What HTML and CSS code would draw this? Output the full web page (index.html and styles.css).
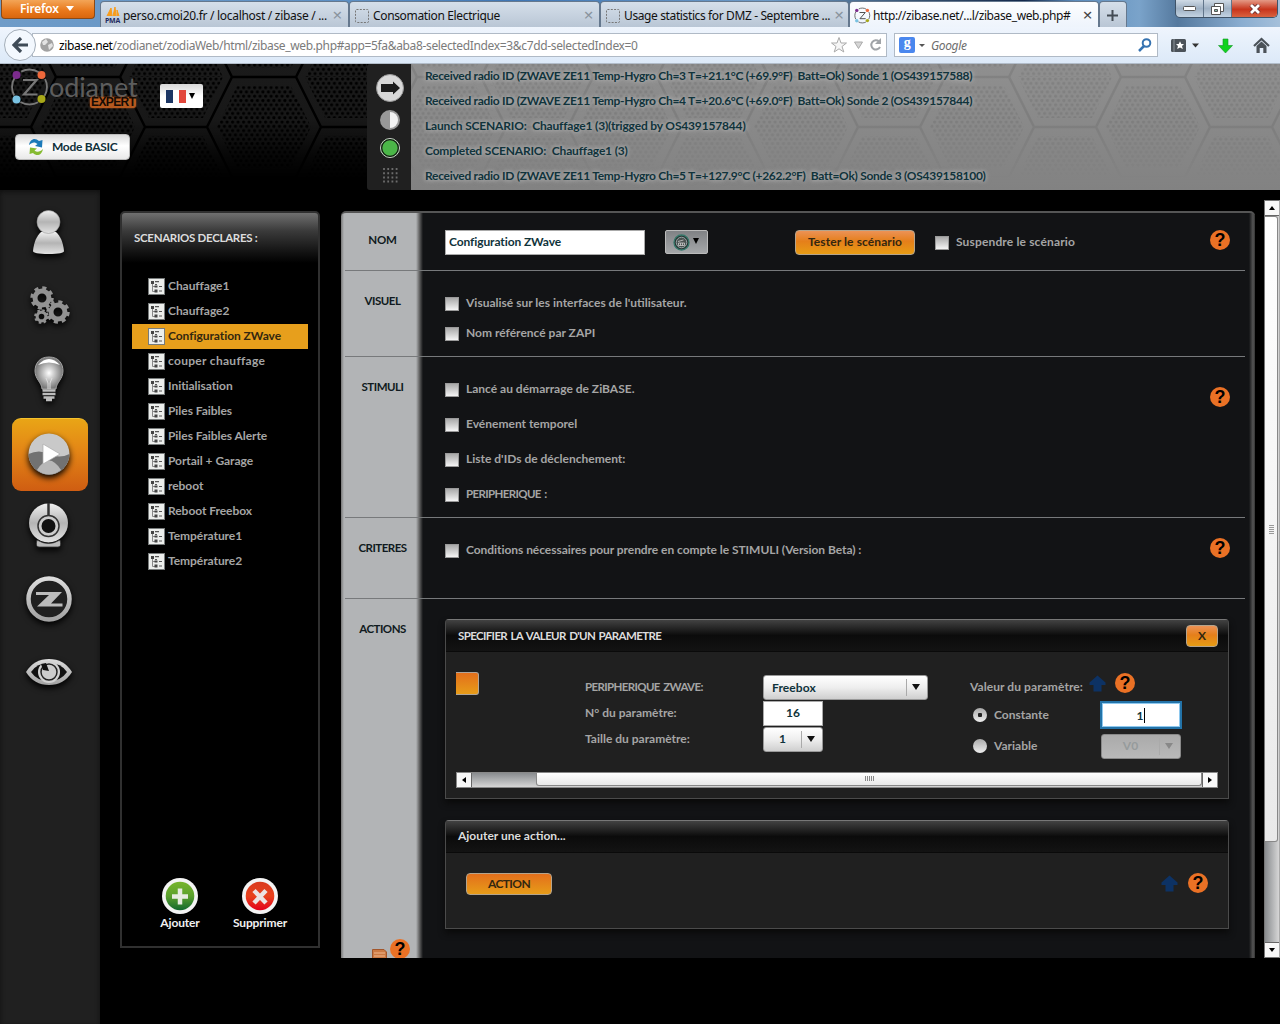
FILE: index.html
```html
<!DOCTYPE html>
<html lang="fr">
<head>
<meta charset="utf-8">
<title>Zodianet EXPERT</title>
<link rel="stylesheet" href="styles.css">
</head>
<body>
<svg class="defs" width="0" height="0" aria-hidden="true">
  <defs>
    <linearGradient id="metal" x1="0" y1="0" x2="0" y2="1"><stop offset="0" stop-color="#f0f0f0"/><stop offset=".5" stop-color="#b4b4b4"/><stop offset="1" stop-color="#e2e2e2"/></linearGradient>
    <linearGradient id="metal2" x1="0" y1="0" x2="0" y2="1"><stop offset="0" stop-color="#dcdcdc"/><stop offset="1" stop-color="#a2a2a2"/></linearGradient>
    <radialGradient id="glow"><stop offset="0" stop-color="#fff"/><stop offset="1" stop-color="#757575"/></radialGradient>
    <linearGradient id="green" x1="0" y1="0" x2="0" y2="1"><stop offset="0" stop-color="#77b52c"/><stop offset=".5" stop-color="#5ba02d"/><stop offset="1" stop-color="#11682f"/></linearGradient>
    <linearGradient id="red" x1="0" y1="0" x2="0" y2="1"><stop offset="0" stop-color="#d93a1e"/><stop offset=".5" stop-color="#e8421d"/><stop offset="1" stop-color="#e3001b"/></linearGradient>
    <pattern id="dots" width="5.500" height="8.600" patternUnits="userSpaceOnUse"><circle cx="1.600" cy="2" r="1.600"/><circle cx="4.350" cy="6.300" r="1.600"/><circle cx="-1.150" cy="6.300" r="1.600"/></pattern>
    <g id="comb">
      <path class="comb-edge" d="M56 0 31 50 56 100M120 0 145 50 120 100M56 0H120M0 50H31M145 50H176M56 100H120"/>
      <path fill="url(#dots)" d="M61 9H115L135 50 115 91H61L41 50ZM0 59H27L47 100H0ZM0 41H27L47 0H0ZM176 59H149L129 100H176ZM176 41H149L129 0H176Z"/>
    </g>
    <pattern id="combDark" width="176" height="100" x="0" y="13" patternUnits="userSpaceOnUse"><use href="#comb"/></pattern>
    <pattern id="combLight" width="176" height="100" x="126" y="13" patternUnits="userSpaceOnUse"><use href="#comb"/></pattern>
    <symbol id="tree" viewBox="0 0 17 17"><rect x=".5" y=".5" width="16" height="16" fill="#eceeec" stroke="#777b7b"/><path d="M4.500 4v9.500H7M4.500 8.500H8" fill="none" stroke="#888"/><path d="M3 3h3v3H3zM6.500 7.500h3v2h-3zM6.500 11.500h3v3h-3z" fill="#444"/><path d="M7 3.700h4M11 8.500h3M11 13h3M7 6.500h2" stroke="#555" stroke-width="1.200"/></symbol>
    <symbol id="up" viewBox="0 0 17 17"><path d="M8.500.5 16.500 7.500V10H12.500V16.500H4.500V10H.5V7.500Z" fill="#0d3264"/></symbol>
    <symbol id="gear" viewBox="-12 -12 24 24"><circle r="7" fill="none" stroke="#929292" stroke-width="5"/><circle r="10" fill="none" stroke="#929292" stroke-width="3.500" stroke-dasharray="4 3.850"/></symbol>
    <symbol id="blank" viewBox="0 0 14 14"><rect x=".5" y=".5" width="13" height="13" rx="1" fill="none" stroke="#777" stroke-dasharray="2 1.300"/></symbol>
    <symbol id="brand" viewBox="0 0 40 40"><circle cx="19.500" cy="20" r="17.500" fill="none" stroke="currentColor" stroke-width="1.800" stroke-dasharray="18.500 9" stroke-dashoffset="9.200"/><circle cx="6.500" cy="8" r="4" fill="#7c2b8d"/><circle cx="31.500" cy="8" r="4" fill="#ee683b"/><circle cx="6.500" cy="32.500" r="4" fill="#79c2e2"/><circle cx="31.500" cy="32" r="4" fill="#a8a819"/><path d="M13 13H26.500L14 27.500H27.500" fill="none" stroke="currentColor" stroke-width="2.200"/></symbol>
  </defs>
</svg>

<div class="window">
  <div class="tabs">
    <div class="firefox">Firefox <i></i></div>
    <div class="tab t1"><svg width="16" height="18"><path d="M2 9 6 1 7 9M8 9 10 0 11 9M12 9V3L14 9" fill="#f89c1c" stroke="#f89c1c"/><text x="0" y="15.500" class="pma">PMA</text></svg><span>perso.cmoi20.fr / localhost / zibase / ...</span><b>×</b></div>
    <div class="tab t2"><svg width="14" height="14"><use href="#blank"/></svg><span>Consomation Electrique</span><b>×</b></div>
    <div class="tab t3"><svg width="14" height="14"><use href="#blank"/></svg><span>Usage statistics for DMZ - Septembre ...</span><b>×</b></div>
    <div class="tab t4"><svg class="ink" width="17" height="17"><use href="#brand"/></svg><span>http://zibase.net/...l/zibase_web.php#</span><b>×</b></div>
    <div class="tab plus"><svg width="11" height="11"><path d="M5.500 0V11M0 5.500H11" stroke="#444c55" stroke-width="2"/></svg></div>
    <div class="winbtns">
      <span><svg width="13" height="6"><rect x=".5" y=".5" width="12" height="4" rx="1" fill="#fff" stroke="#555"/></svg></span>
      <span><svg width="13" height="12"><path d="M3.500.5h9v8h-9z" fill="#fff" stroke="#555"/><path d="M.5 3.500h9v8h-9z" fill="#fff" stroke="#555"/><path d="M3.500 6.500h3v2h-3z" fill="#8ba" stroke="#555"/></svg></span>
      <span class="close"><svg width="12" height="10"><path d="M2 1 10 9M10 1 2 9" stroke="#6a3030" stroke-width="4.500"/><path d="M2 1 10 9M10 1 2 9" stroke="#fff" stroke-width="2.800"/></svg></span>
    </div>
  </div>
  <div class="nav">
    <div class="back"><svg width="16" height="16"><path d="M9 1 2 8 9 15M2 8H16" fill="none" stroke="#3f4b57" stroke-width="3.200"/></svg></div>
    <div class="url"><svg width="14" height="14"><circle cx="7" cy="7" r="6.800" fill="#a2a2a2"/><path d="M2 4 6 1 8 4 5 7 3 7ZM8 7 12 5 13 8 9 12Z" fill="#e3e3e3"/></svg><p><em>zibase.net</em>/zodianet/zodiaWeb/html/zibase_web.php#app=5fa&amp;aba8-selectedIndex=3&amp;c7dd-selectedIndex=0</p>
      <svg width="50" height="18"><path d="M8 1.500 10 7H15.500L11 10.500 12.800 16 8 12.800 3.200 16 5 10.500.5 7H6Z" fill="#f6f6f6" stroke="#aaa"/><path d="M23.500 6H31.500L27.500 12.500Z" fill="#d6d6d6" stroke="#aaa"/><path d="M48 5.500A4.600 4.600 0 1 0 49 11" fill="none" stroke="#a0a4a8" stroke-width="2"/><path d="M50 2V8H44Z" fill="#a0a4a8"/></svg></div>
    <div class="search"><span class="g">g</span><i></i><p>Google</p><svg width="14" height="14"><circle cx="8.500" cy="5" r="3.800" fill="none" stroke="#3673b1" stroke-width="2"/><path d="M6 8 1 13" stroke="#3673b1" stroke-width="2.500"/></svg></div>
    <svg class="tools" width="104" height="18"><rect x="1" y="3" width="15" height="13" rx="1.500" fill="#4b5259"/><path d="M4 3V16" stroke="#8b9299"/><path d="M10 5.200 11.300 8H14L12 10 12.800 13 10 11.400 7.200 13 8 10 6 8H8.700Z" fill="#fff"/><path d="M22 7.500H29L25.500 11.500Z" fill="#333"/><path d="M53 3H58V9.500H62.500L55.500 17 48.500 9.500H53Z" fill="#10d21f" stroke="#16932a" stroke-width=".6"/><path d="M84 10 91.500 3 99 10" fill="none" stroke="#4b5259" stroke-width="2.200"/><path d="M86.500 10 91.500 5.500 96.500 10V17H93.300V12H89.700V17H86.500Z" fill="#4b5259"/></svg>
  </div>

  <div class="banner">
    <div class="brandzone">
      <svg class="mesh dark" width="367" height="126"><rect width="367" height="126" fill="url(#combDark)"/></svg>
      <div class="logo"><svg width="40" height="40"><use href="#brand"/></svg><span>odianet</span><strong>EXPERT</strong></div>
      <div class="flag"><svg width="20" height="13"><path fill="#1c3664" d="M0 0H7V13H0z"/><path fill="#fff" d="M7 0H13V13H7z"/><path fill="#e2473c" d="M13 0H20V13H13z"/></svg><i></i></div>
      <div class="mode"><svg width="16" height="18"><path d="M1 7C2 1 7-1 11 3L14.500 2 14 9.500 7 8 9.500 6C7 3.500 4 4 1 7Z" fill="#1b7ab9"/><path d="M15 11C14 17 9 19 5 15L1.500 16 2 9.500 9 10.500 6.500 12.500C9 14.500 12 14 15 11Z" fill="#86bb32"/></svg>Mode BASIC</div>
    </div>
    <div class="status">
      <svg width="28" height="28"><circle cx="14" cy="14" r="13.500" fill="#d8d8d8" stroke="#999"/><path d="M5 10H17V7.500L24 14 17 20.500V18H5Z" fill="#1d1d1d"/></svg>
      <svg width="22" height="22"><circle cx="11" cy="11" r="10" fill="#999"/><path d="M11 3A8 8 0 0 1 11 19Z" fill="#f3f3f3"/></svg>
      <svg width="22" height="22"><circle cx="11" cy="11" r="9.500" fill="#4bb648" stroke="#ccc"/><circle cx="11" cy="11" r="8.300" fill="none" stroke="#111" stroke-width="1.200"/></svg>
      <svg width="15" height="15"><path d="M1 0V15M5.200 0V15M9.400 0V15M13.600 0V15" stroke="#6c6c6c" stroke-width="1.800" stroke-dasharray="2 2.200"/></svg>
    </div>
    <div class="log">
      <svg class="mesh light" width="869" height="126"><rect width="869" height="126" fill="url(#combLight)"/></svg>
      <p>Received radio ID (ZWAVE ZE11 Temp-Hygro Ch=3 T=+21.1°C (+69.9°F)  Batt=Ok) Sonde 1 (OS439157588)</p>
      <p>Received radio ID (ZWAVE ZE11 Temp-Hygro Ch=4 T=+20.6°C (+69.0°F)  Batt=Ok) Sonde 2 (OS439157844)</p>
      <p class="loose">Launch SCENARIO:  Chauffage1 (3)(trigged by OS439157844)</p>
      <p class="loose">Completed SCENARIO:  Chauffage1 (3)</p>
      <p>Received radio ID (ZWAVE ZE11 Temp-Hygro Ch=5 T=+127.9°C (+262.2°F)  Batt=Ok) Sonde 3 (OS439158100)</p>
    </div>
  </div>

  <div class="app">
    <div class="side">
      <div><svg width="50" height="50"><path d="M9 42C10 32 13 27 17 23H32C36 27 39 32 40 42Q40 45 24.500 45 9 45 9 42Z" fill="url(#metal)"/><circle cx="24.500" cy="13" r="11.500" fill="url(#metal)" stroke="#999" stroke-width=".6"/></svg></div>
      <div><svg width="50" height="50"><use href="#gear" x="6" y="4" width="24" height="24"/><use href="#gear" x="22" y="18" width="24" height="24"/><use href="#gear" x="10" y="27" width="15" height="15"/></svg></div>
      <div><svg width="50" height="50"><path d="M25 2C15 2 11 9 11 16 11 24 18 28 18 34H32C32 28 39 24 39 16 39 9 35 2 25 2Z" fill="url(#glow)" stroke="#a5a5a5"/><path d="M14 10Q25-2 36 10Q25 5 14 10Z" fill="#fff"/><path d="M22 23 24 28V34M28 23 26 28V34" stroke="#ddd" fill="none"/><path d="M18.500 35.500H31.500M18.500 39H31.500M19.500 42.500H30.500M22 45H28" stroke="#bdbdbd" stroke-width="2.400"/></svg></div>
      <div class="on"><svg width="50" height="50"><circle cx="25" cy="25" r="20.500" fill="#c9c9c9"/><path d="M4.500 25Q15 20 25 25T45.500 25A20.500 20.500 0 0 1 4.500 25Z" fill="#727272"/><path d="M13 41Q25 22 37 41 25 50 13 41Z" fill="#b8b8b8"/><path d="M19 15 36 25 19 35Z" fill="#fff" stroke="#aaa" stroke-width=".7"/></svg></div>
      <div><svg width="50" height="50"><circle cx="24.500" cy="22" r="19.500" fill="url(#metal)"/><path d="M24.500 2V16" stroke="#333" stroke-width="2.500"/><circle cx="24.500" cy="25" r="10.500" fill="#ccc" stroke="#333" stroke-width="1.500"/><circle cx="24.500" cy="25" r="7" fill="#111"/><path d="M13 39Q24.500 46 36 39Q38 46 34 46H15Q11 46 13 39Z" fill="#bbb" stroke="#333" stroke-width=".8"/></svg></div>
      <div><svg width="50" height="50"><circle cx="25" cy="25" r="20.500" fill="#202020" stroke="url(#metal2)" stroke-width="4.500"/><path d="M12 18H38L27 29.500H38.500V32.500H13L25 21H12Z" fill="#bcbcbc"/></svg></div>
      <div><svg width="50" height="50"><path d="M2 25Q10 12 25 12T48 25Q40 38 25 38T2 25Z" fill="url(#metal2)"/><path d="M7 25Q13 16 25 16T43 25Q37 34 25 34T7 25Z" fill="#111"/><circle cx="25" cy="25" r="11" fill="#d2d2d2"/><circle cx="25" cy="25" r="8" fill="#ccc" stroke="#222" stroke-width="1.500"/><path d="M17 17 22 16 25 24 19 23Z" fill="#111"/></svg></div>
    </div>

    <div class="stage">
      <div class="scenarios">
        <h2>SCENARIOS DECLARES :</h2>
        <ul>
          <li><svg><use href="#tree"/></svg>Chauffage1</li>
          <li><svg><use href="#tree"/></svg>Chauffage2</li>
          <li class="sel"><svg><use href="#tree"/></svg>Configuration ZWave</li>
          <li class="loose"><svg><use href="#tree"/></svg>couper chauffage</li>
          <li><svg><use href="#tree"/></svg>Initialisation</li>
          <li><svg><use href="#tree"/></svg>Piles Faibles</li>
          <li><svg><use href="#tree"/></svg>Piles Faibles Alerte</li>
          <li><svg><use href="#tree"/></svg>Portail + Garage</li>
          <li><svg><use href="#tree"/></svg>reboot</li>
          <li><svg><use href="#tree"/></svg>Reboot Freebox</li>
          <li><svg><use href="#tree"/></svg>Température1</li>
          <li><svg><use href="#tree"/></svg>Température2</li>
        </ul>
        <div class="acts">
          <div><svg width="36" height="36"><circle cx="18" cy="18" r="18" fill="#f4f4f4"/><circle cx="18" cy="18" r="14.300" fill="url(#green)"/><path d="M18 10.500V26.500M10 18.500H26" stroke="#e6ebe2" stroke-width="4.500"/></svg><span>Ajouter</span></div>
          <div><svg width="36" height="36"><circle cx="18" cy="18" r="18" fill="#f4f4f4"/><circle cx="18" cy="18" r="14.300" fill="url(#red)"/><path d="M12 12.500 24 25M24 12.500 12 25" stroke="#ece2e2" stroke-width="4.500"/></svg><span>Supprimer</span></div>
        </div>
      </div>

      <div class="editor">
        <section class="row r1">
          <h3>NOM</h3>
          <div class="cell">
            <div class="field name">Configuration ZWave</div>
            <div class="iconpick"><svg width="17" height="17"><circle cx="8.500" cy="8.500" r="7.500" fill="#27302f" stroke="#36786b" stroke-width="1.300"/><circle cx="8.500" cy="8.500" r="5.300" fill="#4b5251" stroke="#9aa"/><path d="M5 7.500 10.500 6M5.500 9H11.500V11.500H5.500ZM7.500 9V11.500M9.500 9V11.500" stroke="#ccc" stroke-width=".8" fill="none"/></svg><i></i></div>
            <div class="btn test">Tester le scénario</div>
            <div class="check susp"><i></i><span>Suspendre le scénario</span></div>
            <span class="help">?</span>
          </div>
        </section>
        <section class="row r2">
          <h3>VISUEL</h3>
          <div class="cell">
            <div class="checks"><div class="check"><i></i><span>Visualisé sur les interfaces de l'utilisateur.</span></div><div class="check"><i></i><span>Nom référencé par ZAPI</span></div></div>
          </div>
        </section>
        <section class="row r3">
          <h3>STIMULI</h3>
          <div class="cell">
            <div class="checks"><div class="check"><i></i><span>Lancé au démarrage de ZiBASE.</span></div><div class="check"><i></i><span>Evénement temporel</span></div><div class="check"><i></i><span>Liste d'IDs de déclenchement:</span></div><div class="check"><i></i><span class="caps">PERIPHERIQUE :</span></div></div>
            <span class="help">?</span>
          </div>
        </section>
        <section class="row r4">
          <h3>CRITERES</h3>
          <div class="cell">
            <div class="checks"><div class="check"><i></i><span class="tight">Conditions nécessaires pour prendre en compte le STIMULI (Version Beta) :</span></div></div>
            <span class="help">?</span>
          </div>
        </section>
        <section class="row r5">
          <h3>ACTIONS<span class="foot"><svg width="15" height="9"><path d="M.5 9V.5H12L14.500 3V9" fill="#cc7a44" stroke="#a2562b"/><path d="M2 4H13M2 7H13" stroke="#f0b78e"/></svg><span class="help">?</span></span></h3>
          <div class="cards">
            <div class="card c1">
              <header><span class="caps">SPECIFIER LA VALEUR D'UN PARAMETRE</span><div class="btn x">X</div></header>
              <div class="form">
                <div class="stub"></div>
                <div class="params">
                  <label class="caps">PERIPHERIQUE ZWAVE:</label><div class="select wide"><span>Freebox</span><i></i></div>
                  <label>N° du paramètre:</label><div class="field num">16</div>
                  <label>Taille du paramètre:</label><div class="select small"><span>1</span><i></i></div>
                </div>
                <div class="value">
                  <div class="vhead"><span>Valeur du paramètre:</span><svg width="17" height="17"><use href="#up"/></svg><span class="help">?</span></div>
                  <div class="opt"><i class="radio on"></i><span>Constante</span><div class="field focus">1<b></b></div></div>
                  <div class="opt o2"><i class="radio"></i><span>Variable</span><div class="select off"><span>V0</span><i></i></div></div>
                </div>
              </div>
              <div class="hbar"><i class="arr l"></i><div class="track"><div class="thumb"><svg width="9" height="5"><path d="M.5 0V5M2.500 0V5M4.500 0V5M6.500 0V5M8.500 0V5" stroke="#888"/></svg></div></div><i class="arr r"></i></div>
            </div>
            <div class="card c2">
              <header><span>Ajouter une action...</span></header>
              <div class="add"><div class="btn action">ACTION</div><svg width="17" height="17"><use href="#up"/></svg><span class="help">?</span></div>
            </div>
          </div>
        </section>
      </div>
    </div>
    <div class="vbar"><i class="arr u"></i><div class="vtrack"><div class="vthumb"><svg width="5" height="9"><path d="M0 .5H5M0 2.500H5M0 4.500H5M0 6.500H5M0 8.500H5" stroke="#999"/></svg></div></div><i class="arr d"></i></div>
  </div>
</div>
</body>
</html>
```
FILE: styles.css
```css
* { box-sizing: border-box; }
body { margin: 0; background: #000; font: 700 12px/16px Lato, "Open Sans", sans-serif; color: #a5a5a5; }
p, h2, h3, ul { margin: 0; padding: 0; font: inherit; }
svg { display: block; flex: none; }
.defs { position: absolute; }
.window { width: 1280px; height: 1024px; overflow: hidden; display: flex; flex-direction: column; }

/* browser tabs */
.tabs { height: 27px; flex: none; display: flex; align-items: flex-end; background: linear-gradient(90deg, #6f9cc8, #5c8fc4 28%, #3f76b4 40%, #6f9cc8 60%, #34506e 72%, #14284a 80%, #5b8cbc 84%, #7aa3ca 89%, #55799e 92%, #8aadd0 97%, #a5c0da); font: 400 12px/16px "Noto Sans", "Open Sans", sans-serif; color: #111; }
.firefox { width: 94px; height: 19px; margin: 0 5px 8px 1px; padding: 0 0 1px 18px; border: 1px solid #8a4a17; border-top: 0; border-radius: 0 0 4px 4px; background: linear-gradient(#f3a557, #e8771a 60%, #d9660d); color: #fff; font-size: 12px; font-weight: 600; letter-spacing: -.2px; display: flex; align-items: center; gap: 7px; }
.firefox i { border: 4px solid transparent; border-top: 5px solid #fff; border-bottom: 0; }
.tab { height: 26px; display: flex; align-items: center; padding: 2px 6px 0 5px; border: 1px solid #65788e; border-bottom: 0; border-radius: 4px 4px 0 0; background: linear-gradient(#d5dfea, #b9c6d5); gap: 4px; white-space: nowrap; letter-spacing: -.35px; }
.tab span { flex: 1; }
.tab b { font: 400 17px/14px "Noto Sans", sans-serif; color: #8a949e; padding-bottom: 2px; }
.t1 { width: 249px; letter-spacing: -.3px; }
.t2 { width: 251px; }
.t3 { width: 249px; letter-spacing: -.38px; }
.t4 { width: 250px; background: linear-gradient(#fdfeff, #eef4fc); letter-spacing: -.38px; }
.t2 span { letter-spacing: -.35px; }
.t4 b { color: #444; }
.t1, .t4 { padding-left: 4px; }
.t1 { gap: 2px; }
.t4 { gap: 2px; }
.ink { color: #444; }
.plus { width: 28px; justify-content: center; }
.pma { font: 700 7px/7px "Open Sans", sans-serif; fill: #222a60; }
.winbtns { display: flex; align-self: flex-start; height: 18px; width: 103px; margin-left: 48px; border: 1px solid #3f5368; border-top: 0; border-radius: 0 0 5px 5px; overflow: hidden; background: linear-gradient(#d0dbe6, #9fb1c4 50%, #c3d3e2); }
.winbtns span { width: 28px; display: flex; align-items: center; justify-content: center; border-right: 1px solid #61758a; }
.winbtns .close { flex: 1; border: 0; background: linear-gradient(#e49a86, #c8351c 55%, #d9623f); }

/* address bar */
.nav { height: 37px; flex: none; display: flex; align-items: center; background: linear-gradient(#eff5fd, #dce9f8); border-bottom: 1px solid #b1bcc9; padding-left: 4px; font: 400 12px/18px "Noto Sans", "Open Sans", sans-serif; letter-spacing: -.35px; }
.back { width: 32px; height: 32px; flex: none; border: 1px solid #a4aeb9; border-radius: 50%; background: #f3f8fe; display: flex; align-items: center; justify-content: center; z-index: 1; }
.url { height: 24px; width: 855px; margin-left: -4px; padding: 0 5px 0 7px; border: 1px solid #b0bac6; background: #fff; display: flex; align-items: center; gap: 5px; color: #7b7b7b; white-space: nowrap; }
.url p, .search p { padding-top: 1px; }
.url p { flex: 1; }
.url em { font-style: normal; color: #000; }
.search { width: 264px; height: 24px; margin-left: 7px; padding: 0 5px 0 4px; border: 1px solid #b0bac6; background: #fff; display: flex; align-items: center; gap: 4px; }
.search p { flex: 1; font-style: italic; color: #6e6e6e; padding-left: 2px; }
.search i { border: 3px solid transparent; border-top-color: #555; border-bottom: 0; }
.g { width: 16px; height: 16px; border-radius: 2px; background: #4a87ee; color: #fff; font: 700 14px/12px "Liberation Serif", serif; text-align: center; }
.tools { margin-left: 12px; }

/* banner */
.banner { height: 126px; flex: none; display: flex; }
.brandzone { width: 367px; position: relative; background: #000; }
.mesh { position: absolute; left: 0; top: 0; -webkit-mask-image: linear-gradient(#000 45%, transparent 92%); mask-image: linear-gradient(#000 45%, transparent 92%); }
.comb-edge { fill: none; stroke: #000; stroke-width: 2.5; }
.dark { background: linear-gradient(#1b1b1b, #161616 60%, #080808); }
.light { opacity: .08; }
.logo { position: absolute; left: 10px; top: 3px; display: flex; color: #777; }
.logo span { font: 400 27px/40px Lato, sans-serif; letter-spacing: -.1px; margin-left: -1px; color: #5d5d5d; }
.logo strong { position: absolute; left: 80px; top: 30px; background: #b5591f; border-radius: 3px; color: #160b04; font: 700 12px/11px "Liberation Sans", sans-serif; padding: 0 1px; box-shadow: 0 0 2px #b5591f; letter-spacing: -.6px; }
.flag { position: absolute; left: 160px; top: 20px; width: 43px; height: 24px; border-radius: 2px; background: linear-gradient(#d8d8d8, #fff 50%); display: flex; align-items: center; padding-left: 6px; gap: 3px; }
.flag i, .iconpick i { border: 3.500px solid transparent; border-top: 6px solid #000; border-bottom: 0; }
.iconpick i { margin-top: -2px; }
.mode { position: absolute; left: 15px; top: 70px; width: 115px; height: 26px; border-radius: 4px; background: linear-gradient(#dadada, #fff 45%, #e9e9e9); border: 1px solid #bbb; display: flex; align-items: center; gap: 8px; padding-left: 12px; color: #10303a; letter-spacing: -.3px; }
.status { width: 44px; background: #202020; display: flex; flex-direction: column; align-items: center; padding: 10px 0 0 2px; border-radius: 3px 0 0 3px; }
.status svg:nth-child(2) { margin-top: 7px; }
.status svg:nth-child(3) { margin-top: 6px; }
.status svg:nth-child(4) { margin-top: 9px; }
.log { flex: 1; position: relative; background: linear-gradient(#8f8f8f, #828282); padding-left: 14px; color: #10333b; line-height: 23px; text-shadow: 0 0 4px #bbb, 0 0 6px #aaa; letter-spacing: -.29px; }
.log p { position: relative; height: 25px; white-space: pre; }
.log .loose { letter-spacing: -.17px; }

/* app body */
.app { flex: 1; display: flex; background: #000; }
.side { width: 100px; background: #202020; padding: 9px 0 0; display: flex; flex-direction: column; align-items: center; box-shadow: inset 0 2px 5px #111; }
.side div { width: 76px; height: 73px; margin-right: 1px; padding: 0 2px 3px 0; display: flex; align-items: center; justify-content: center; }
.side svg { filter: drop-shadow(0 3px 3px #000); }
.side .on { border-radius: 9px; background: linear-gradient(#e9a516, #e38516 45%, #cf5d12); border-top: 1px solid #f5c32c; }
.stage { width: 1164px; padding: 21px 9px 0 20px; display: flex; align-items: flex-start; gap: 21px; }
.scenarios { width: 200px; height: 737px; border: 2px solid #303030; border-radius: 5px 5px 0 0; background: linear-gradient(#707070, #3a3a3a 18px, #111 40px, #000 50px); display: flex; flex-direction: column; padding: 17px 10px 0; }
.scenarios h2 { color: #dcdcdc; padding-left: 2px; font-size: 11.5px; letter-spacing: -.3px; }
.scenarios ul { list-style: none; padding-top: 28px; flex: 1; }
.scenarios li { height: 25px; display: flex; align-items: center; gap: 3px; padding: 0 0 2px 16px; letter-spacing: -.05px; }
.scenarios li svg { width: 17px; height: 17px; margin-top: 2px; }
.scenarios .loose { letter-spacing: .3px; }
.sel { background: #e79f1c; color: #33270f; }
.acts { display: flex; padding: 0 8px 15px; color: #f0f0f0; letter-spacing: -.15px; }
.acts div { width: 80px; display: flex; flex-direction: column; align-items: center; gap: 1px; }

/* scenario editor */
.editor { width: 914px; height: 747px; border-radius: 5px 5px 0 0; border-top: 2px solid #555; background: linear-gradient(90deg, #777, #b2b4b6 3px, #b2b4b6 75px, #555 79px, #121315 82px, #121315 908px, #555 912px, #333); padding: 0 10px 0 4px; overflow: hidden; display: flex; flex-direction: column; }
.row { display: flex; flex: none; border-bottom: 1px solid #77797b; }
.row h3 { width: 75px; flex: none; text-align: center; padding-top: 22px; color: #101a20; font-size: 11.500px; letter-spacing: -.5px; }
.cell { flex: 1; display: flex; align-items: flex-start; padding: 0 15px 0 25px; }
.r1 { height: 58px; }
.r1 h3 { padding-top: 19px; letter-spacing: -.2px; }
.r2 { height: 86px; }
.r3 { height: 161px; }
.r4 { height: 81px; }
.r5 { flex: 1; border: 0; }
.checks { flex: 1; padding-top: 17px; }
.check { height: 30px; display: flex; align-items: center; gap: 7px; white-space: nowrap; }
.r3 .checks { padding-top: 15px; }
.r3 .check { height: 35px; padding-bottom: 1px; }
.check i { width: 14px; height: 14px; background: linear-gradient(#a9a9a9, #f4f4f4); border: 1px solid #999; flex: none; margin-top: 1px; }
.susp span { letter-spacing: .15px; }
.tight { letter-spacing: -.05px; }
.caps { font-size: 11.5px; letter-spacing: -.63px; word-spacing: 1.2px; }
.help { width: 20px; height: 20px; flex: none; border-radius: 50%; background: #ea7125; color: #000; font: 700 18px/20px "Liberation Sans", sans-serif; text-align: center; letter-spacing: 0; }
.r1 .help { margin: 17px 0 0 auto; }
.r3 .help { margin-top: 30px; }
.r4 .help { margin-top: 20px; }
.field { background: #fff; border: 1px solid #aaa; color: #10333b; height: 25px; line-height: 22px; }
.name { width: 200px; margin-top: 17px; padding-left: 3px; letter-spacing: -.1px; }
.iconpick { width: 43px; height: 24px; margin: 17px 0 0 20px; border: 1px solid #bbb; border-radius: 2px; background: linear-gradient(#808285, #a5a7a9); display: flex; align-items: center; gap: 3px; padding-left: 7px; }
.btn { border: 1px solid #b5a48c; border-radius: 4px; background: linear-gradient(#ec9256, #e57f1a 45%, #e79c14); color: #33270f; text-align: center; }
.test { width: 120px; height: 25px; line-height: 22px; margin: 17px 0 0 87px; letter-spacing: .1px; }
.susp { margin: 14px 0 0 20px; }

.foot { display: flex; align-items: flex-end; padding: 302px 0 0 27px; gap: 3px; }
.foot .help { margin-bottom: -1px; }
.cards { flex: 1; padding: 20px 16px 0 25px; display: flex; flex-direction: column; gap: 21px; }
.card { border: 1px solid #4b4b4b; border-top-color: #777; border-radius: 4px 4px 0 0; background: #202020; box-shadow: 0 4px 6px #0a0a0a; }
.card header { height: 32px; border-bottom: 1px solid #0a0a0a; background: linear-gradient(#424242, #0b0b0b 50%, #131313); color: #dcdcdc; display: flex; align-items: center; justify-content: space-between; padding: 0 10px 0 12px; }
.c1 { height: 180px; }
.c2 { height: 109px; }
.c2 header { padding-bottom: 1px; }
.x { width: 32px; height: 22px; line-height: 20px; }
.form { height: 120px; display: flex; align-items: flex-start; padding: 20px 0 0 10px; }
.stub { width: 23px; height: 23px; border: 1px solid #b0a59a; border-left: 0; border-radius: 0 3px 3px 0; background: linear-gradient(#e36f1c, #e79c18); }
.params { margin: 2px 0 0 106px; width: 343px; display: grid; grid-template-columns: 178px 165px; grid-auto-rows: 26px; align-items: center; }
.select { height: 25px; border: 1px solid #999; border-radius: 3px; background: linear-gradient(#fff, #eee 50%, #cfcfcf); color: #10333b; display: flex; align-items: center; }
.select span { flex: 1; text-align: center; }
.select i { width: 21px; height: 17px; border-left: 1px solid #aaa; display: flex; align-items: center; justify-content: center; padding-right: 2px; }
.select i::before { content: ""; border: 4px solid transparent; border-top: 6px solid #111; border-bottom: 0; }
.wide { width: 165px; }
.wide span { text-align: left; padding: 1px 0 0 8px; letter-spacing: .1px; }
.num, .small { width: 60px; }
.num { text-align: center; }
.value { margin: -1px 0 0 42px; width: 213px; }
.vhead { height: 24px; display: flex; align-items: center; letter-spacing: .08px; white-space: nowrap; }
.vhead span:first-child { width: 114px; padding-top: 7px; }
.vhead svg { margin: 0 9px 0 5px; }
.vhead .help { margin-top: -1px; }
.opt { display: flex; align-items: center; height: 28px; margin-top: 6px; padding-left: 3px; }
.o2 { margin-top: 3px; }
.radio { width: 14px; height: 14px; border-radius: 50%; background: linear-gradient(#aaa, #eee); margin-right: 7px; }
.radio.on { background: radial-gradient(circle, #222 2px, transparent 2.500px), linear-gradient(#aaa, #eee); }
.opt > span { width: 106px; }
.focus { width: 82px; height: 28px; line-height: 23px; border: 2px solid #2373a8; box-shadow: inset 0 0 0 1px #8ec8ee; display: flex; align-items: center; justify-content: center; }
.focus b { width: 1px; height: 15px; background: #000; margin-left: 1px; }
.off { width: 80px; margin-left: 1px; background: linear-gradient(#aaa, #b9b9b9); border-color: #888; color: #969b9c; }
.off i::before { border-top-color: #888; }

.hbar { height: 16px; margin: 0 10px; display: flex; border: 1px solid #888; }
.arr { width: 14px; height: 14px; flex: none; background: #f8f8f8; display: flex; align-items: center; justify-content: center; }
.arr::before { content: ""; border: 3px solid transparent; }
.l::before { border-right: 4px solid #000; border-left: 0; }
.r::before { border-left: 4px solid #000; border-right: 0; }
.u::before { border-bottom: 4px solid #000; border-top: 0; }
.d::before { border-top: 4px solid #000; border-bottom: 0; }
.track { flex: 1; background: linear-gradient(#888b8e, #d6d6d6); border: solid #666; border-width: 0 1px; padding-left: 64px; }
.thumb { height: 13px; background: linear-gradient(#fff, #e9e9e9); border: 1px solid #888; border-top: 0; border-radius: 0 0 3px 3px; display: flex; justify-content: center; padding-top: 3px; }
.add { display: flex; align-items: flex-start; padding: 20px 20px 0; }
.action { width: 86px; height: 22px; line-height: 20px; margin-right: auto; background: linear-gradient(#e36f1c, #e79c18); letter-spacing: -.6px; }
.add svg { margin: 2px 10px 0 0; }

.vbar { width: 16px; height: 758px; margin-top: 10px; display: flex; flex-direction: column; background: #ddd; border: 1px solid #777; border-right-color: #aaa; }
.vtrack { flex: 1; background: linear-gradient(90deg, #888b8e, #d6d6d6); border: solid #666; border-width: 1px 0; padding-right: 1px; }
.vthumb { height: 626px; background: linear-gradient(#fff, #e9e9e9); border: 1px solid #888; border-left: 0; border-radius: 0 3px 3px 0; display: flex; align-items: center; justify-content: center; }
```
